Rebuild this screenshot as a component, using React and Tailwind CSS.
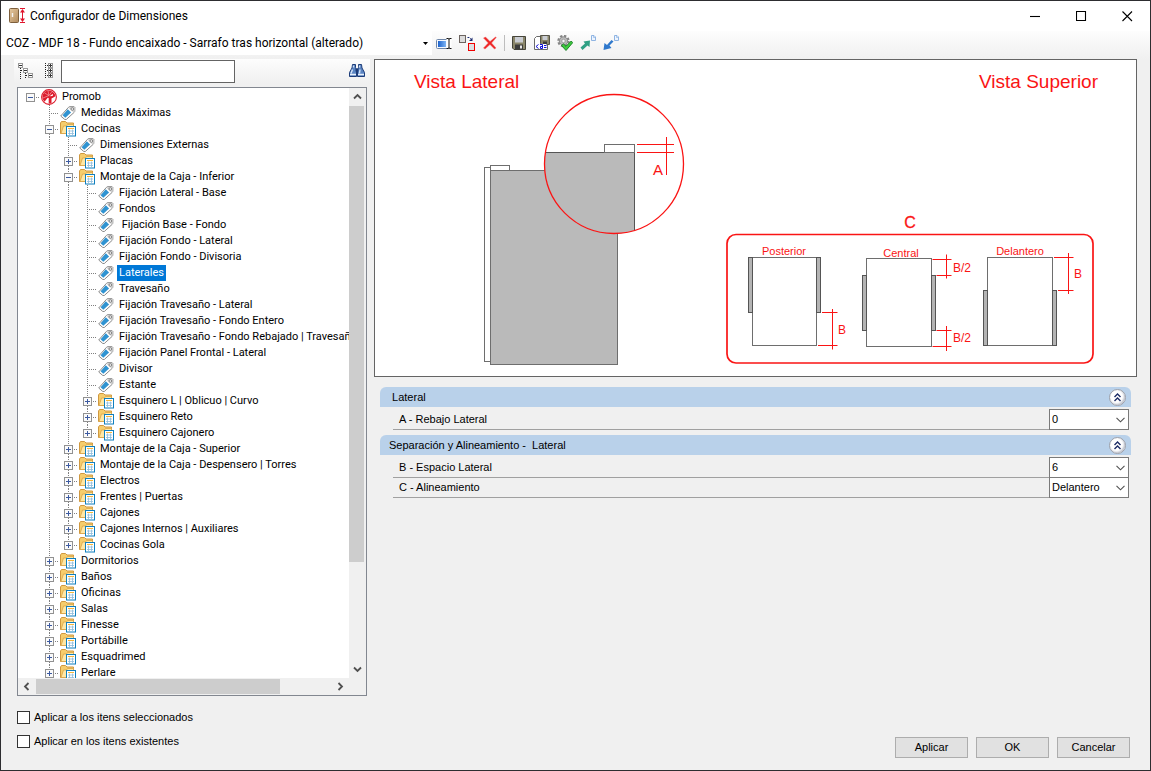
import React, { useState } from 'react';

const treeData = {
  label: 'Promob',
  icon: 'logo',
  open: true,
  children: [
    { label: 'Medidas Máximas' },
    {
      label: 'Cocinas',
      icon: 'folder',
      open: true,
      children: [
        { label: 'Dimensiones Externas' },
        { label: 'Placas', icon: 'folder' },
        {
          label: 'Montaje de la Caja - Inferior',
          icon: 'folder',
          open: true,
          children: [
            { label: 'Fijación Lateral - Base' },
            { label: 'Fondos' },
            { label: ' Fijación Base - Fondo' },
            { label: 'Fijación Fondo - Lateral' },
            { label: 'Fijación Fondo - Divisoria' },
            { label: 'Laterales' },
            { label: 'Travesaño' },
            { label: 'Fijación Travesaño - Lateral' },
            { label: 'Fijación Travesaño - Fondo Entero' },
            { label: 'Fijación Travesaño - Fondo Rebajado | Travesañ' },
            { label: 'Fijación Panel Frontal - Lateral' },
            { label: 'Divisor' },
            { label: 'Estante' },
            { label: 'Esquinero L | Oblicuo | Curvo', icon: 'folder' },
            { label: 'Esquinero Reto', icon: 'folder' },
            { label: 'Esquinero Cajonero', icon: 'folder' },
          ],
        },
        { label: 'Montaje de la Caja - Superior', icon: 'folder' },
        { label: 'Montaje de la Caja - Despensero | Torres', icon: 'folder' },
        { label: 'Electros', icon: 'folder' },
        { label: 'Frentes | Puertas', icon: 'folder' },
        { label: 'Cajones', icon: 'folder' },
        { label: 'Cajones Internos | Auxiliares', icon: 'folder' },
        { label: 'Cocinas Gola', icon: 'folder' },
      ],
    },
    { label: 'Dormitorios', icon: 'folder' },
    { label: 'Baños', icon: 'folder' },
    { label: 'Oficinas', icon: 'folder' },
    { label: 'Salas', icon: 'folder' },
    { label: 'Finesse', icon: 'folder' },
    { label: 'Portábille', icon: 'folder' },
    { label: 'Esquadrimed', icon: 'folder' },
    { label: 'Perlare', icon: 'folder' },
  ],
};

const groups = [
  {
    title: ' Lateral',
    fields: [{ id: 'rebajo', label: 'A - Rebajo Lateral', options: ['0', '3', '6'] }],
  },
  {
    title: 'Separación y Alineamiento -  Lateral',
    fields: [
      { id: 'espacio', label: 'B - Espacio Lateral', options: ['6', '0', '3'] },
      { id: 'alineamiento', label: 'C - Alineamiento', options: ['Delantero', 'Central', 'Posterior'] },
    ],
  },
];

function AppIcon() {
  return (
    <svg className="h-4 w-4" viewBox="0 0 16 16">
      <defs>
        <linearGradient id="door" x1="0" x2="1" y1="0" y2="1">
          <stop offset="0" stopColor="#e6c9a0" />
          <stop offset="1" stopColor="#b08a5c" />
        </linearGradient>
      </defs>
      <rect x="0.5" y="0.5" width="9" height="14" rx="1" fill="url(#door)" stroke="#7d5f3c" />
      <path d="M3.5 5v4" stroke="#f4f4f4" strokeWidth="1.4" />
      <path d="M11 0.5h5M11 14.5h5M13.5 2v11" stroke="#e0142c" fill="none" />
      <path d="M13.5 1l2.5 3.5h-5zM13.5 14l2.5-3.5h-5z" fill="#e0142c" />
    </svg>
  );
}

function RenameIcon() {
  return (
    <svg className="h-4 w-4" viewBox="0 0 16 16">
      <defs>
        <linearGradient id="field" x1="0" x2="1">
          <stop offset="0" stopColor="#1c62cc" />
          <stop offset="1" stopColor="#7db4f4" />
        </linearGradient>
      </defs>
      <rect x="0.5" y="4.5" width="12" height="9" rx="1" fill="#f4f8fd" stroke="#6f86a8" />
      <rect x="2" y="6" width="8" height="6" fill="url(#field)" />
      <path d="M10.5 3.5h5v10h-5z" fill="#fff" stroke="none" />
      <path d="M10.5 3.5H12l1 .5 1-.5h1.500M13 4v9M10.500 13.500H12l1-.5 1 .5h1.500" stroke="#111" fill="none" />
    </svg>
  );
}

function ReplaceIcon() {
  return (
    <svg className="h-4 w-4" viewBox="0 0 16 16">
      <rect x="0.5" y="0.5" width="6" height="7" fill="#dcdcdc" stroke="#6c6460" />
      <path d="M8.5 2.5h2l2 2" stroke="#1a2a70" strokeDasharray="1.5 .7" fill="none" />
      <path d="M13.500 2.500v3.500H10z" fill="#1a2a70" />
      <rect x="9.500" y="8.500" width="6" height="7" fill="#dcdfe2" stroke="#f00000" />
    </svg>
  );
}

function DeleteIcon() {
  return (
    <svg className="h-4 w-4" viewBox="0 0 16 16">
      <path d="M1.500 3l2-1 4.500 4.500L13.500 2l.8.500L9.500 8l4.500 5-1.500 1L8 9.500 3 14l-1.500-1L6.300 8z" fill="#ee2222" stroke="#f06a6a" strokeWidth="0.500" />
    </svg>
  );
}

function SaveIcon() {
  return (
    <svg className="h-4 w-4" viewBox="0 0 16 16">
      <path d="M1.500 1.500h13v13H3l-1.500-1.500z" fill="#8a866a" stroke="#45443a" />
      <rect x="4" y="2" width="8" height="5.500" fill="#c9ccd2" />
      <rect x="4" y="9.500" width="8" height="5" fill="#3c3c3c" />
      <rect x="9" y="10.500" width="2" height="3" fill="#e8e8e8" />
    </svg>
  );
}

function SaveAsIcon() {
  return (
    <svg className="h-4 w-4" viewBox="0 0 16 16">
      <path d="M0.500 3.500l2-2h6v13h-8z" fill="#fff" stroke="#6a6a6a" />
      <path d="M11 9.500h2.500v5H8" fill="#fff" stroke="#6a6a6a" />
      <path d="M6.500 0.500h9v9h-8l-1-1z" fill="#8a866a" stroke="#55534a" />
      <rect x="8.500" y="1" width="5" height="4" fill="#c9ccd2" />
      <rect x="9" y="6.500" width="4" height="3" fill="#3c3c3c" />
      <rect x="1.500" y="9" width="11" height="5" fill="#fff" />
      <path d="M4.500 9.500l-2.500 2 2.500 2M6 9.500h2.500v4H6.500v-2h2M10 10.500h2.500M10 12.500h2.500" stroke="#1010d8" fill="none" />
    </svg>
  );
}

function GearCheckIcon() {
  return (
    <svg className="h-4 w-4" viewBox="0 0 16 16">
      <circle cx="6.500" cy="6" r="5" fill="none" stroke="#858585" strokeWidth="2.400" strokeDasharray="2.300 1.600" />
      <circle cx="6.500" cy="6" r="4.200" fill="#b9b9b9" stroke="#8a8a8a" />
      <circle cx="6.500" cy="6" r="1.700" fill="#f7f7f7" stroke="#858585" strokeWidth="0.600" />
      <path d="M4.500 10.500l2-1.600 2.500 2.400 5.200-5.300 1.500 1.700L9 15.500z" fill="#3ecb3e" stroke="#177a24" strokeWidth="0.900" />
    </svg>
  );
}

function DocMark() {
  return (
    <>
      <path d="M11.500 0.500h2.500l1.500 1.500v3.500h-4z" fill="#eef5ff" stroke="#8fb4e2" />
      <path d="M13.500 1v1.500H15" stroke="#8fb4e2" fill="none" strokeWidth="0.700" />
    </>
  );
}

function ExportIcon() {
  return (
    <svg className="h-4 w-4" viewBox="0 0 16 16">
      <path d="M0.500 12.500L5 8.500 3.500 6.500 10 5.500 9.500 12 7.500 10.500 2.500 15z" fill="#2fa084" />
      <DocMark />
    </svg>
  );
}

function ImportIcon() {
  return (
    <svg className="h-4 w-4" viewBox="0 0 16 16">
      <path d="M10.500 6.500L6.500 10.500 8.500 13 0.500 15 1.500 8 4 10 8.500 5z" fill="#2f78cc" />
      <DocMark />
    </svg>
  );
}

function CollapseIcon() {
  return (
    <svg className="h-4 w-4" viewBox="0 0 16 16">
      <path d="M2.500 5v11M7.500 10v6" stroke="#222" strokeDasharray="1 1" />
      <path d="M3 7.500h2M8 12.500h2" stroke="#222" strokeDasharray="1 1" />
      {[[0.5, 0.5], [5.5, 5.5], [10.5, 10.5]].map(([x, y]) => (
        <g key={x}>
          <rect x={x} y={y} width="4" height="4" fill="#fff" stroke="#999" />
          <path d={`M${x + 0.5} ${y + 2}h3`} stroke="#333" />
        </g>
      ))}
    </svg>
  );
}

function ExpandIcon() {
  return (
    <svg className="h-4 w-4" viewBox="0 0 16 16">
      <path d="M4.500 0v16M6 2.500h1M6 7.500h1M6 12.500h1" stroke="#222" strokeDasharray="1 1" />
      {[0.5, 5.5, 10.5].map((y) => (
        <g key={y}>
          <rect x="7.500" y={y} width="4" height="4" fill="#fff" stroke="#999" />
          <path d={`M8 ${y + 2}h3M9.500 ${y + 0.5}v3`} stroke="#333" />
        </g>
      ))}
    </svg>
  );
}

function BinocularsIcon() {
  return (
    <svg className="h-4 w-4" viewBox="0 0 16 16">
      <path d="M3.500 1.500h3v3l1 2v7h-7v-4l2.500-4.500zM9.500 1.500h3l.5 3.500 2.500 4.500v4h-7v-7l1-2z" fill="#5a84c2" stroke="#1d3c78" />
      <path d="M6.500 5.500h3v3h-3z" fill="#1d3c78" />
      <path d="M3.500 6.500l-1.500 4M11 6.500l-.5 4M4.500 2.500v2M10.500 2.500v2" stroke="#d3e3f8" strokeWidth="1.400" />
      <path d="M1 11.500h6M9 11.500h6" stroke="#e8f0fb" strokeWidth="1.500" />
    </svg>
  );
}

function TagIcon() {
  return (
    <svg className="ml-px h-4 w-4" viewBox="0 0 16 16">
      <path d="M0.700 11L8.500 2.300 9.800 1.500h4.200l.8.800v4l-.8 1.200-7.700 7H4.800z" fill="#fdfdfd" stroke="#8c8c8c" strokeLinejoin="round" />
      <path d="M10 1.800h4l.6.600v4l-1 1.200-4.800-4.600z" fill="#cfcfcf" />
      <path d="M2.600 10.300l5.200-6 3.300 3.100-5.800 5.400z" fill="#2f93d1" />
      <circle cx="12.300" cy="4" r="1.300" fill="#fff" stroke="#777" strokeWidth="0.900" />
    </svg>
  );
}

function FolderIcon() {
  return (
    <svg className="ml-px h-4 w-4" viewBox="0 0 16 16">
      <path d="M0.500 12.500V2l1-1.500h4l1.500 1.500h6.500v10.500z" fill="#f6cd6c" stroke="#cf9840" />
      <path d="M1 12.500L3.500 5h3l1-1.500h6v9z" fill="#ffe7a4" stroke="#d9a548" strokeWidth="0.800" />
      <rect x="6.500" y="5.500" width="9" height="9.500" fill="#fff" stroke="#0f7fbe" />
      <path d="M8 7.500h6" stroke="#f5b73c" />
      <path d="M8 10h6M8 12.500h6M9.500 8.500v5.500M12.500 8.500v5.500" stroke="#8fbddb" strokeWidth="0.800" />
    </svg>
  );
}

function LogoIcon() {
  return (
    <svg className="ml-px h-4 w-4" viewBox="0 0 16 16">
      <circle cx="8" cy="8" r="7.400" fill="#fff" stroke="#dc1c2c" strokeWidth="1.100" />
      <path d="M8 1.500A6.500 6.500 0 0 0 3.500 12.700l3.200-3.900 1 .3v5.400c1.200 0 2-.2 2.800-.6V9.500l2.300-1.300 1.600-.9A6.500 6.500 0 0 0 8 1.500z" fill="#dc1c2c" />
      <path d="M8 6.500L7 2M8 6.500L3.500 4M8 6.500L2 9M8 6.500L11 2.500" stroke="#f7b6bb" strokeWidth="0.600" />
      <path d="M8.500 7.200l3.500-2.500-.3 2.200z" fill="#fff" />
    </svg>
  );
}

const nodeIcons = { folder: FolderIcon, logo: LogoIcon, tag: TagIcon };

// One 19px column of the dotted connector lines
function Guide({ top, bottom, branch }) {
  return (
    <svg className="h-4 w-[19px] shrink-0" viewBox="0 0 19 16" shapeRendering="crispEdges">
      {top && <path d="M9.500 0v8" stroke="#808080" strokeDasharray="1 1" />}
      {bottom && <path d="M9.500 8v8" stroke="#808080" strokeDasharray="1 1" />}
      {branch && <path d="M9 8.500h10" stroke="#808080" strokeDasharray="1 1" />}
    </svg>
  );
}

function Expander({ open, first, last, onClick, label }) {
  return (
    <button type="button" onClick={onClick} aria-label={label} className="h-4 w-[19px] shrink-0">
      <svg className="h-4 w-[19px]" viewBox="0 0 19 16" shapeRendering="crispEdges">
        {!first && <path d="M9.500 0v4" stroke="#808080" strokeDasharray="1 1" />}
        {!last && <path d="M9.500 13v3" stroke="#808080" strokeDasharray="1 1" />}
        <path d="M15 8.500h4" stroke="#808080" strokeDasharray="1 1" />
        <rect x="5.500" y="4.500" width="8" height="8" fill="#fafafa" stroke="#919191" />
        <path d={open ? 'M7 8.500h5' : 'M7 8.500h5M9.500 6v5'} stroke="#3c5aa0" />
      </svg>
    </button>
  );
}

function TreeNode({ node, lines, first, last, selected, onSelect }) {
  const [open, setOpen] = useState(Boolean(node.open));
  const NodeIcon = nodeIcons[node.icon || 'tag'];
  const isRoot = node.icon === 'logo';
  const active = selected === node.label;

  return (
    <li>
      <div className="flex h-4 items-center">
        {lines.map((visible, i) => (
          <Guide key={i} top={visible} bottom={visible} />
        ))}
        {node.icon ? (
          <Expander open={open} first={first} last={last} label={node.label} onClick={() => setOpen(!open)} />
        ) : (
          <Guide top bottom={!last} branch />
        )}
        <span className="w-[19px] shrink-0">
          <NodeIcon />
        </span>
        <button
          type="button"
          onClick={() => onSelect(node.label)}
          className={`ml-px h-4 px-0.5 leading-4 whitespace-pre ${active ? 'bg-[#0078d7] text-white' : ''}`}
        >
          {node.label}
        </button>
      </div>
      {open && node.children && (
        <ul>
          {node.children.map((child, i) => (
            <TreeNode
              key={child.label}
              node={child}
              lines={[...lines, !isRoot && !last]}
              last={i === node.children.length - 1}
              selected={selected}
              onSelect={onSelect}
            />
          ))}
        </ul>
      )}
    </li>
  );
}

function ScrollArrow({ d, label }) {
  return (
    <button type="button" aria-label={label} className="flex h-[17px] w-[17px] shrink-0 items-center justify-center">
      <svg className="h-[9px] w-[9px]" viewBox="0 0 9 9">
        <path d={d} fill="none" stroke="#505050" strokeWidth="1.800" />
      </svg>
    </button>
  );
}

function TreePanel() {
  const [selected, setSelected] = useState('Laterales');

  return (
    <div className="mr-[3px] ml-[3px] flex min-h-0 flex-1 flex-col border border-[#828790] bg-white">
      <div className="flex min-h-0 flex-1">
        <ul className="min-w-0 flex-1 overflow-hidden pt-px pl-[3px] font-[Roboto,'Liberation_Sans',sans-serif]">
          <TreeNode node={treeData} lines={[]} first last selected={selected} onSelect={setSelected} />
        </ul>
        <div className="flex w-[17px] shrink-0 flex-col bg-[#f0f0f0]">
          <ScrollArrow label="Subir" d="M1 6.500l3.500-3.500L8 6.500" />
          <div className="min-h-0 flex-1">
            <div className="mr-0.5 mt-px h-[82%] bg-[#cdcdcd]" />
          </div>
          <ScrollArrow label="Bajar" d="M1 2.500L4.500 6 8 2.500" />
        </div>
      </div>
      <div className="flex h-[17px] shrink-0 bg-[#f0f0f0] pr-[17px]">
        <ScrollArrow label="Izquierda" d="M6.500 1L3 4.500 6.500 8" />
        <div className="min-w-0 flex-1 py-px">
          <div className="ml-px h-full w-[82%] bg-[#cdcdcd]" />
        </div>
        <ScrollArrow label="Derecha" d="M2.500 1L6 4.500 2.500 8" />
      </div>
    </div>
  );
}

function Diagram() {
  return (
    <div className="border border-[#646464] bg-white">
      <svg className="h-[316px] w-full" viewBox="0 0 761 316" fontFamily="'Liberation Sans', Arial, sans-serif" fill="#fa1414">
        <text x="39" y="28" fontSize="19">Vista Lateral</text>
        <text x="604" y="28" fontSize="19">Vista Superior</text>

        <g stroke="#6e6e6e">
          <rect x="109.500" y="107.500" width="6" height="194" fill="#fff" />
          <rect x="115.500" y="105.500" width="19" height="5" fill="#fff" />
          <rect x="115.500" y="110.500" width="127" height="194" fill="#bababa" />
        </g>
        <clipPath id="lens">
          <circle cx="239" cy="104" r="69.500" />
        </clipPath>
        <g clipPath="url(#lens)">
          <rect x="169" y="34" width="140" height="140" fill="#fff" />
          <rect x="160.500" y="92.500" width="99" height="90" fill="#bababa" stroke="#555" />
          <rect x="229.500" y="84.500" width="30" height="8" fill="#fff" stroke="#6e6e6e" />
        </g>
        <circle cx="239" cy="104" r="69.500" fill="none" stroke="#fa1414" strokeWidth="1.300" />
        <path d="M262 84.500h37M262 92.500h37M291.500 77v38" stroke="#fa1414" />
        <text x="278" y="115" fontSize="15">A</text>

        <text x="535" y="168" fontSize="16" textAnchor="middle" stroke="#fa1414" strokeWidth="0.300">C</text>
        <rect x="352" y="174.500" width="366" height="128.500" rx="9" fill="none" stroke="#fa1414" strokeWidth="1.700" />

        <g fontSize="11" textAnchor="middle">
          <text x="409" y="195">Posterior</text>
          <text x="526" y="197">Central</text>
          <text x="645" y="195">Delantero</text>
        </g>

        <g stroke="#6e6e6e" fill="#fff">
          <rect x="377.500" y="197.500" width="64" height="88" />
          <rect x="491.500" y="198.500" width="65" height="88" />
          <rect x="612.500" y="197.500" width="65" height="88" />
        </g>
        <g stroke="#555" fill="#b4b4b4">
          <rect x="373.500" y="197.500" width="4" height="55" />
          <rect x="441.500" y="197.500" width="4" height="55" />
          <rect x="487.500" y="215.500" width="4" height="55" />
          <rect x="556.500" y="215.500" width="4" height="55" />
          <rect x="608.500" y="230.500" width="4" height="55" />
          <rect x="677.500" y="230.500" width="4" height="55" />
        </g>
        <g stroke="#fa1414">
          <path d="M447 252.500h15.500M443 285.500h19.500M457.500 249v40.500" />
          <path d="M557.500 199.500h19M561.500 215.500h15M571.500 194.500v24" />
          <path d="M561.500 270.500h15M557.500 286.500h19M571.500 266v25" />
          <path d="M679 197.500h19.500M683 230.500h15.500M693.500 193v41" />
        </g>
        <g fontSize="12">
          <text x="463" y="274">B</text>
          <text x="578" y="212">B/2</text>
          <text x="578" y="282">B/2</text>
          <text x="699" y="218">B</text>
        </g>
      </svg>
    </div>
  );
}

function Field({ field }) {
  return (
    <div className="ml-[13px] mr-0.5 flex h-5 items-start">
      <label htmlFor={field.id} className="h-[21px] flex-1 border-b border-[#a0a0a0] pl-1.5 leading-[21px]">
        {field.label}
      </label>
      <div className="relative w-20">
        <select id={field.id} className="block h-[21px] w-full appearance-none border border-[#7a7a7a] bg-white pl-0.5 leading-[19px]">
          {field.options.map((option) => (
            <option key={option}>{option}</option>
          ))}
        </select>
        <svg className="pointer-events-none absolute top-2 right-1 h-[6px] w-[9px]" viewBox="0 0 9 6">
          <path d="M0.500 0.800l4 4 4-4" fill="none" stroke="#505050" strokeWidth="1.100" />
        </svg>
      </div>
    </div>
  );
}

function FieldGroup({ group }) {
  const [open, setOpen] = useState(true);

  return (
    <section className="mb-1.5">
      <div className="mb-0.5 flex h-5 items-center justify-between rounded-t-md bg-[#b9d1ea] pr-[5px] pl-[9px]">
        <h2 className="whitespace-pre">{group.title}</h2>
        <button
          type="button"
          aria-label={group.title.trim()}
          onClick={() => setOpen(!open)}
          className="flex h-[17px] w-[17px] items-center justify-center rounded-full border border-[#9a9ea8] bg-white shadow-[inset_-1px_-1px_2px_#b8bcc8]"
        >
          <svg className="h-[9px] w-[9px]" viewBox="0 0 9 9">
            <path d="M1.500 4l3-3 3 3M1.500 8l3-3 3 3" fill="none" stroke="#1c2c66" strokeWidth="1.400" />
          </svg>
        </button>
      </div>
      {open && group.fields.map((field) => <Field key={field.id} field={field} />)}
    </section>
  );
}

function ToolButton({ icon, label }) {
  const IconComponent = icon;

  return (
    <button type="button" aria-label={label} className="flex h-6 w-[23px] shrink-0 items-center justify-center">
      <IconComponent />
    </button>
  );
}

function TitleBar() {
  return (
    <header className="flex h-[30px] shrink-0 items-center bg-white pl-2 font-[Roboto,'Open_Sans',sans-serif] text-xs">
      <AppIcon />
      <h1 className="ml-[5px] flex-1">Configurador de Dimensiones</h1>
      {[
        ['Minimizar', 'M0 5.500h10'],
        ['Maximizar', 'M0.500 0.500h9v9h-9z'],
        ['Cerrar', 'M0.500 0.500l9.500 9.500M10 0.500L0.500 10'],
      ].map(([label, d]) => (
        <button key={label} type="button" aria-label={label} className="flex h-full w-[46px] items-center justify-center">
          <svg className="h-[11px] w-[11px]" viewBox="0 0 11 11">
            <path d={d} fill="none" stroke="#000" strokeWidth="1.100" />
          </svg>
        </button>
      ))}
    </header>
  );
}

function Toolbar() {
  return (
    <div className="flex h-7 shrink-0 items-start bg-linear-to-b from-[#fdfdfd] to-[#f0f0f0]">
      <div className="relative">
        <select
          aria-label="Configuración"
          className="block h-6 w-[431px] appearance-none bg-white pl-[5px] font-[Roboto,'Open_Sans',sans-serif] text-xs"
        >
          <option>COZ - MDF 18 - Fundo encaixado - Sarrafo tras horizontal (alterado)</option>
        </select>
        <svg className="pointer-events-none absolute top-[11px] right-1 h-[3px] w-[5px]" viewBox="0 0 5 3">
          <path d="M0 0h5L2.500 3z" />
        </svg>
      </div>
      <ToolButton icon={RenameIcon} label="Renombrar" />
      <ToolButton icon={ReplaceIcon} label="Duplicar" />
      <ToolButton icon={DeleteIcon} label="Eliminar" />
      <div className="mr-0.5 ml-[3px] mt-1 h-4 w-px bg-[#bdbdbd]" />
      <ToolButton icon={SaveIcon} label="Guardar" />
      <ToolButton icon={SaveAsIcon} label="Guardar como" />
      <ToolButton icon={GearCheckIcon} label="Validar" />
      <ToolButton icon={ExportIcon} label="Exportar" />
      <ToolButton icon={ImportIcon} label="Importar" />
    </div>
  );
}

function Check({ label }) {
  return (
    <label className="flex h-6 items-center">
      <input type="checkbox" className="mr-1 h-[13px] w-[13px] appearance-none border border-[#333] bg-white checked:bg-[#0078d7]" />
      {label}
    </label>
  );
}

export default function App() {
  return (
    <div className="flex h-screen flex-col border border-[#2d2d30] bg-[#f0f0f0] font-['Liberation_Sans',Arial,sans-serif] text-[11px] text-black">
      <TitleBar />
      <Toolbar />
      <main className="flex min-h-0 flex-1 pr-[13px] pl-[13px]">
        <aside className="mr-1 flex w-[356px] shrink-0 flex-col">
          <div className="mb-1 flex h-6 shrink-0 items-center bg-linear-to-b from-[#fdfdfd] to-[#f0f0f0] pr-0.5">
            <ToolButton icon={CollapseIcon} label="Contraer todo" />
            <ToolButton icon={ExpandIcon} label="Expandir todo" />
            <input type="text" aria-label="Buscar" className="ml-px h-[23px] w-[174px] border border-[#646464] bg-white px-1" />
            <div className="flex-1" />
            <ToolButton icon={BinocularsIcon} label="Buscar siguiente" />
          </div>
          <TreePanel />
        </aside>
        <div className="min-w-0 flex-1">
          <Diagram />
          <div className="mx-1.5 mt-2.5">
            {groups.map((group) => (
              <FieldGroup key={group.title} group={group} />
            ))}
          </div>
        </div>
      </main>
      <footer className="flex shrink-0 items-end justify-between pt-[9px] pr-5 pb-3 pl-4">
        <div className="mb-[5px]">
          <Check label="Aplicar a los itens seleccionados" />
          <Check label="Aplicar en los itens existentes" />
        </div>
        <div className="flex gap-2">
          {['Aplicar', 'OK', 'Cancelar'].map((label) => (
            <button key={label} type="button" className="h-[21px] w-[73px] border border-[#adadad] bg-[#e1e1e1]">
              {label}
            </button>
          ))}
        </div>
      </footer>
    </div>
  );
}
